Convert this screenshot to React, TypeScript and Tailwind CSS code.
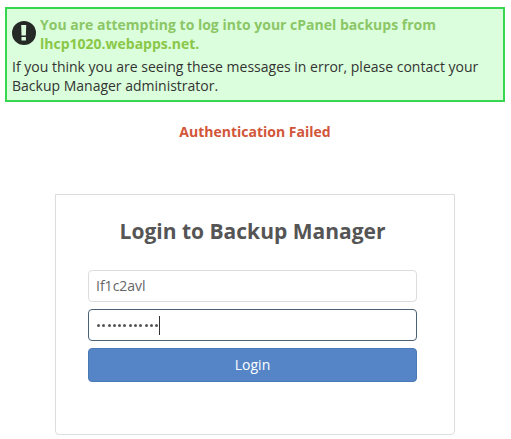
export default function App() {
  return (
    <main className="h-[439px] w-[511px] overflow-hidden bg-white pt-[7px] font-['Open_Sans',sans-serif] text-sm text-[#333]">
      <section className="ml-[5px] h-[95px] w-[500px] border-2 border-[#36d74e] bg-[#dbffdc] px-[5px] pt-[6px] leading-[19px]">
        <div className="flex gap-[4px]">
          <svg viewBox="0 0 24 24" className="mt-[6px] size-6 shrink-0">
            <circle cx="12" cy="12" r="12" fill="#252a27" />
            <path d="M9.2 4h5l-.3 10.6H9.5zM9.5 16h4.4v3.6H9.5z" fill="#dbffdc" />
          </svg>
          <p className="whitespace-nowrap font-bold text-[#8bc667]">
            You are attempting to log into your cPanel backups from
            <br />
            <span className="text-[#8ac748]">lhcp1020.webapps.net.</span>
          </p>
        </div>
        <p className="mt-[4px] whitespace-nowrap">
          If you think you are seeing these messages in error, please contact your
          <br />
          Backup Manager administrator.
        </p>
      </section>
      <p className="mt-[20px] pr-px text-center font-bold leading-5 text-[#d2553a]">Authentication Failed</p>
      <form className="ml-[55px] mt-[52px] flex h-[241px] w-[400px] flex-col rounded-b border border-[#ddd] pl-[32px] pr-[37px]">
        <h1 className="mt-[20px] whitespace-nowrap text-center text-[21px] font-bold leading-[32px] text-[#555]">
          Login to Backup Manager
        </h1>
        <div className="mt-[23px] flex h-8 items-center rounded border border-[#ddd] px-[7px] text-[#666]">If1c2avl</div>
        <div className="mt-[7px] flex h-8 items-center rounded border border-[#4a6075] pl-[8px]">
          <div className="flex gap-[2.3px]">
            {Array.from({ length: 12 }, (_, i) => (
              <span key={i} className="size-[3px] rounded-full bg-[#555]" />
            ))}
          </div>
          <span className="ml-[0.7px] h-[19px] w-px bg-[#333]" />
        </div>
        <button type="button" className="mt-[7px] h-[34px] rounded border border-[#4a7ab5] bg-[#5585c7] text-white">
          Login
        </button>
      </form>
    </main>
  );
}
